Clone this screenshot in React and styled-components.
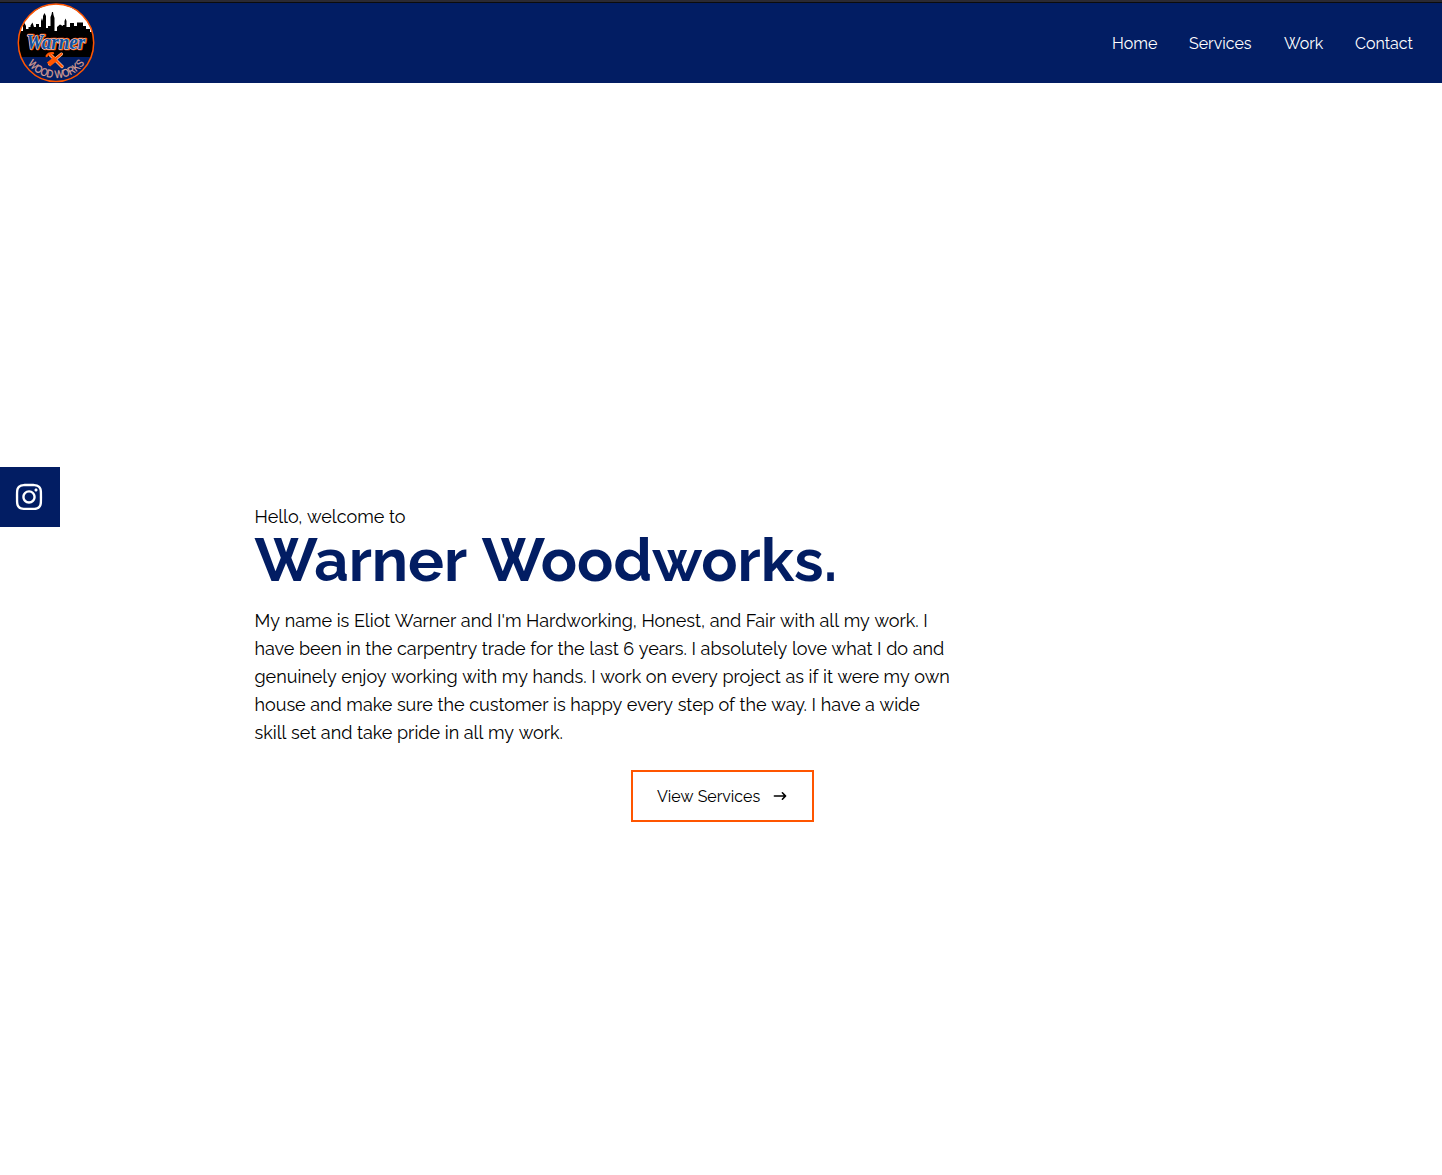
import React from "react";
import styled, { createGlobalStyle } from "styled-components";
import { FaInstagram } from "react-icons/fa";
import { HiArrowNarrowRight } from "react-icons/hi";

const navy = "#021d63";
const orange = "#ff5500";

const GlobalStyle = createGlobalStyle`
  *, *::before, *::after { box-sizing: border-box; }
  body { margin: 0; background: #fff; color: #000; font-family: Raleway, Lato, sans-serif; }
  h1, p { margin: 0; }
`;

const Page = styled.div`
  height: 1175px;
  display: flex;
  flex-direction: column;
  overflow: hidden;
`;

const WindowEdge = styled.div`
  height: 3px;
  flex: none;
  background: #2b2a33;
  border-bottom: 1px solid #0c0c0d;
`;

const Header = styled.header`
  height: 80px;
  flex: none;
  background: ${navy};
  display: flex;
  align-items: center;
  justify-content: space-between;
  padding: 0 29px 0 16px;
`;

const LogoMark = styled.svg`
  width: 80px;
  height: 80px;
  display: block;
`;

const Nav = styled.nav`
  display: flex;
  gap: 32px;
  padding-top: 2px;
`;

const NavLink = styled.a`
  color: #fff;
  font-size: 16px;
  line-height: 24px;
  white-space: nowrap;
  width: ${(p) => p.$width}px;
`;

const Main = styled.main`
  flex: 1;
  display: flex;
  align-items: flex-start;
`;

const Social = styled.a`
  width: 60px;
  height: 60px;
  margin-top: 384px;
  background: ${navy};
  color: #fff;
  display: flex;
  align-items: center;
  padding-left: 14px;
`;

const Intro = styled.section`
  width: 936px;
  margin: 420px 0 0 194.5px;
  display: flex;
  flex-direction: column;
`;

const Greeting = styled.p`
  font-size: 18px;
  line-height: 28px;
`;

const Title = styled.h1`
  color: ${navy};
  font-size: 60px;
  font-weight: 700;
  line-height: 60px;
  margin: -1px 0 1px;
  white-space: nowrap;
`;

const Bio = styled.p`
  padding-top: 16px;
  max-width: 700px;
  font-size: 18px;
  line-height: 28px;
`;

/* Each word is shaped alone, so Raleway does not kern across spaces. */
const Word = styled.span`
  display: inline-block;
`;

const ServicesButton = styled.button`
  align-self: center;
  width: 183px;
  height: 52px;
  margin-top: 23px;
  padding: 0 24px;
  display: flex;
  align-items: center;
  justify-content: space-between;
  background: #fff;
  border: 2px solid ${orange};
  color: #000;
  font: 16px/24px Raleway, Lato, sans-serif;
  white-space: nowrap;
`;

const ButtonLabel = styled.span`
  padding-top: 2px;
`;

const links = [
  { label: "Home", width: 45 },
  { label: "Services", width: 63 },
  { label: "Work", width: 39 },
  { label: "Contact", width: 58 },
];

const bio =
  "My name is Eliot Warner and I'm Hardworking, Honest, and Fair with all my work. I have been in the carpentry trade for the last 6 years. I absolutely love what I do and genuinely enjoy working with my hands. I work on every project as if it were my own house and make sure the customer is happy every step of the way. I have a wide skill set and take pride in all my work.";

function Words({ text }) {
  return text.split(" ").map((word, i) => (
    <React.Fragment key={i}>
      {i > 0 && " "}
      <Word>{word}</Word>
    </React.Fragment>
  ));
}

function Logo() {
  return (
    <LogoMark viewBox="6 3 80 80" aria-label="Warner Wood Works">
      <defs>
        <clipPath id="disc"><ellipse cx="46" cy="42.8" rx="37.6" ry="38.6" /></clipPath>
        <path id="rim" d="M12.9 54.5 A35 35 0 0 0 79.1 54.5" />
      </defs>
      <g clipPath="url(#disc)">
        <rect x="6" y="3" width="80" height="80" fill={navy} />
        <rect x="6" y="3" width="80" height="40" fill="#fff" />
        <path fill="#000" d="M6 57V31H13V25L14.5 23 16 26V29H18.5V27H20.5V25.5L22.5 22.5 24 27H26V24H29V27H31V21L32 18 33 21V16L34.5 13 36 16V28H38V26H40.5V17L41.5 14.5 42 12H43L43.5 15 44.5 18V31H47V27L50 24.5 53 26V25H54.5V21L55.5 18.5 56.5 21V27H60V23H64V26H67V22.5H73V26H76V29H80V32H86V57Z" />
      </g>
      <ellipse cx="46" cy="42.8" rx="37.7" ry="38.7" fill="none" stroke={orange} strokeWidth="1.5" />
      <g fontFamily="'Liberation Serif', serif" fontSize="21" fontWeight="700" fontStyle="italic" strokeLinejoin="round">
        <text x="16.8" y="49.2" textLength="59" lengthAdjust="spacingAndGlyphs" fill={orange} stroke={orange} strokeWidth="2.4">Warner</text>
        <text x="16.2" y="48.6" textLength="59" lengthAdjust="spacingAndGlyphs" fill="#114f9c" stroke="#d5dfeb" strokeWidth="1.2" paintOrder="stroke">Warner</text>
      </g>
      <g fill="none" strokeLinecap="round">
        <path d="M40.5 55 L52 66.5" stroke="#ffd7c3" strokeWidth="3.2" />
        <path d="M40.5 55 L52 66.5" stroke={orange} strokeWidth="2.3" />
        <path d="M51.5 54 L39.5 64" stroke="#ffd7c3" strokeWidth="3" />
        <path d="M51.5 54 L46 58.5" stroke={orange} strokeWidth="2.2" />
        <path d="M46 58.5 L38.5 64.5" stroke={orange} strokeWidth="5" strokeLinecap="butt" />
        <path d="M36.7 56 Q38.5 52.8 43 53.2" stroke={orange} strokeWidth="2.4" />
      </g>
      <text fontFamily="'Liberation Sans', Arial, sans-serif" fontSize="11" fill="#dda294" stroke="#dda294" strokeWidth=".25">
        <textPath href="#rim" startOffset="10.5" textLength="66" lengthAdjust="spacingAndGlyphs">WOOD WORKS</textPath>
      </text>
    </LogoMark>
  );
}

export default function App() {
  return (
    <Page>
      <GlobalStyle />
      <WindowEdge />
      <Header>
        <Logo />
        <Nav>
          {links.map((l) => (
            <NavLink key={l.label} $width={l.width}>{l.label}</NavLink>
          ))}
        </Nav>
      </Header>
      <Main>
        <Social aria-label="Instagram"><FaInstagram size={30} /></Social>
        <Intro>
          <Greeting><Words text="Hello, welcome to" /></Greeting>
          <Title><Words text="Warner Woodworks." /></Title>
          <Bio><Words text={bio} /></Bio>
          <ServicesButton>
            <ButtonLabel><Words text="View Services" /></ButtonLabel>
            <HiArrowNarrowRight size={16} />
          </ServicesButton>
        </Intro>
      </Main>
    </Page>
  );
}
